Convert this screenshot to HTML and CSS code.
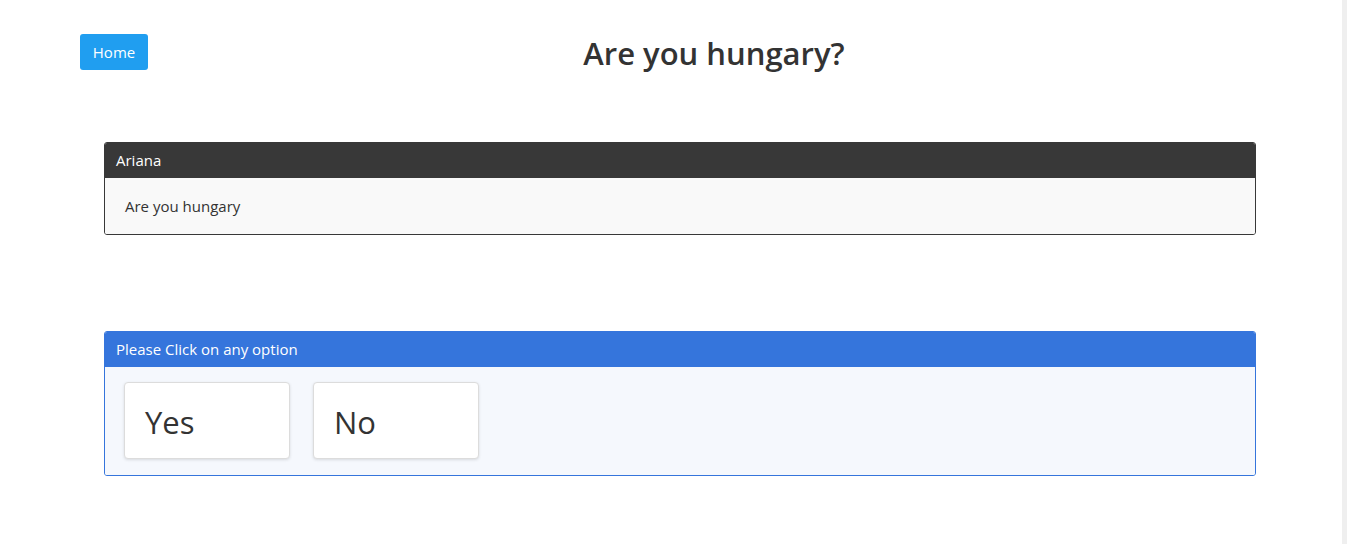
FILE: index.html
```html
<!DOCTYPE html>
<html lang="en">
<head>
<meta charset="utf-8">
<title>Are you hungary?</title>
<link rel="stylesheet" href="styles.css">
</head>
<body>
<div class="page">
  <header class="top">
    <a class="btn-home" href="#">Home</a>
    <h1 class="title">Are you hungary?</h1>
  </header>
  <section class="card card-dark">
    <div class="card-head">Ariana</div>
    <div class="card-body">Are you hungary</div>
  </section>
  <section class="card card-blue">
    <div class="card-head">Please Click on any option</div>
    <div class="card-body options">
      <button class="option">Yes</button>
      <button class="option">No</button>
    </div>
  </section>
</div>
<div class="scroll-track"></div>
</body>
</html>
```
FILE: styles.css
```css
html, body {
  margin: 0;
  height: 100%;
}
body {
  display: flex;
  font-family: "Open Sans", "Noto Sans", sans-serif;
  color: #333;
  background: #fff;
}
.page {
  flex: 1;
  padding: 34px 62px 0 80px;
}
.scroll-track {
  width: 5px;
  background: #efefef;
}
.top {
  display: flex;
  align-items: center;
  height: 36px;
}
.btn-home {
  display: inline-flex;
  align-items: center;
  justify-content: center;
  width: 68px;
  height: 36px;
  box-sizing: border-box;
  background: #209ef0;
  color: #fff;
  font-size: 15px;
  text-decoration: none;
  border-radius: 3px;
}
.title {
  flex: 1;
  margin: 0;
  text-align: center;
  font-size: 31px;
  line-height: 36px;
  font-weight: 600;
  color: #333;
  padding-top: 2px;
}
.card {
  margin: 0 24px;
  border-radius: 3px;
  overflow: hidden;
  font-size: 15px;
}
.card-dark {
  margin-top: 72px;
  border: 1px solid #383838;
}
.card-blue {
  margin-top: 96px;
  border: 1px solid #3575dc;
}
.card-head {
  height: 35px;
  line-height: 35px;
  padding-left: 11px;
  color: #fff;
}
.card-dark .card-head { background: #383838; }
.card-blue .card-head { background: #3575dc; }
.card-dark .card-body {
  background: #f9f9f9;
  padding: 18px 20px 18px;
  line-height: 20px;
}
.card-blue .card-body {
  background: #f5f8fd;
}
.options {
  display: flex;
  gap: 23px;
  padding: 15px 19px 16px;
}
.option {
  width: 166px;
  height: 77px;
  box-sizing: border-box;
  background: #fff;
  border: 1px solid #dcdcdc;
  border-radius: 4px;
  box-shadow: 0 1px 3px rgba(0,0,0,0.12);
  font-family: inherit;
  font-size: 31px;
  font-weight: 500;
  color: #333;
  text-align: left;
  padding: 2px 0 0 20px;
  cursor: pointer;
}
```
